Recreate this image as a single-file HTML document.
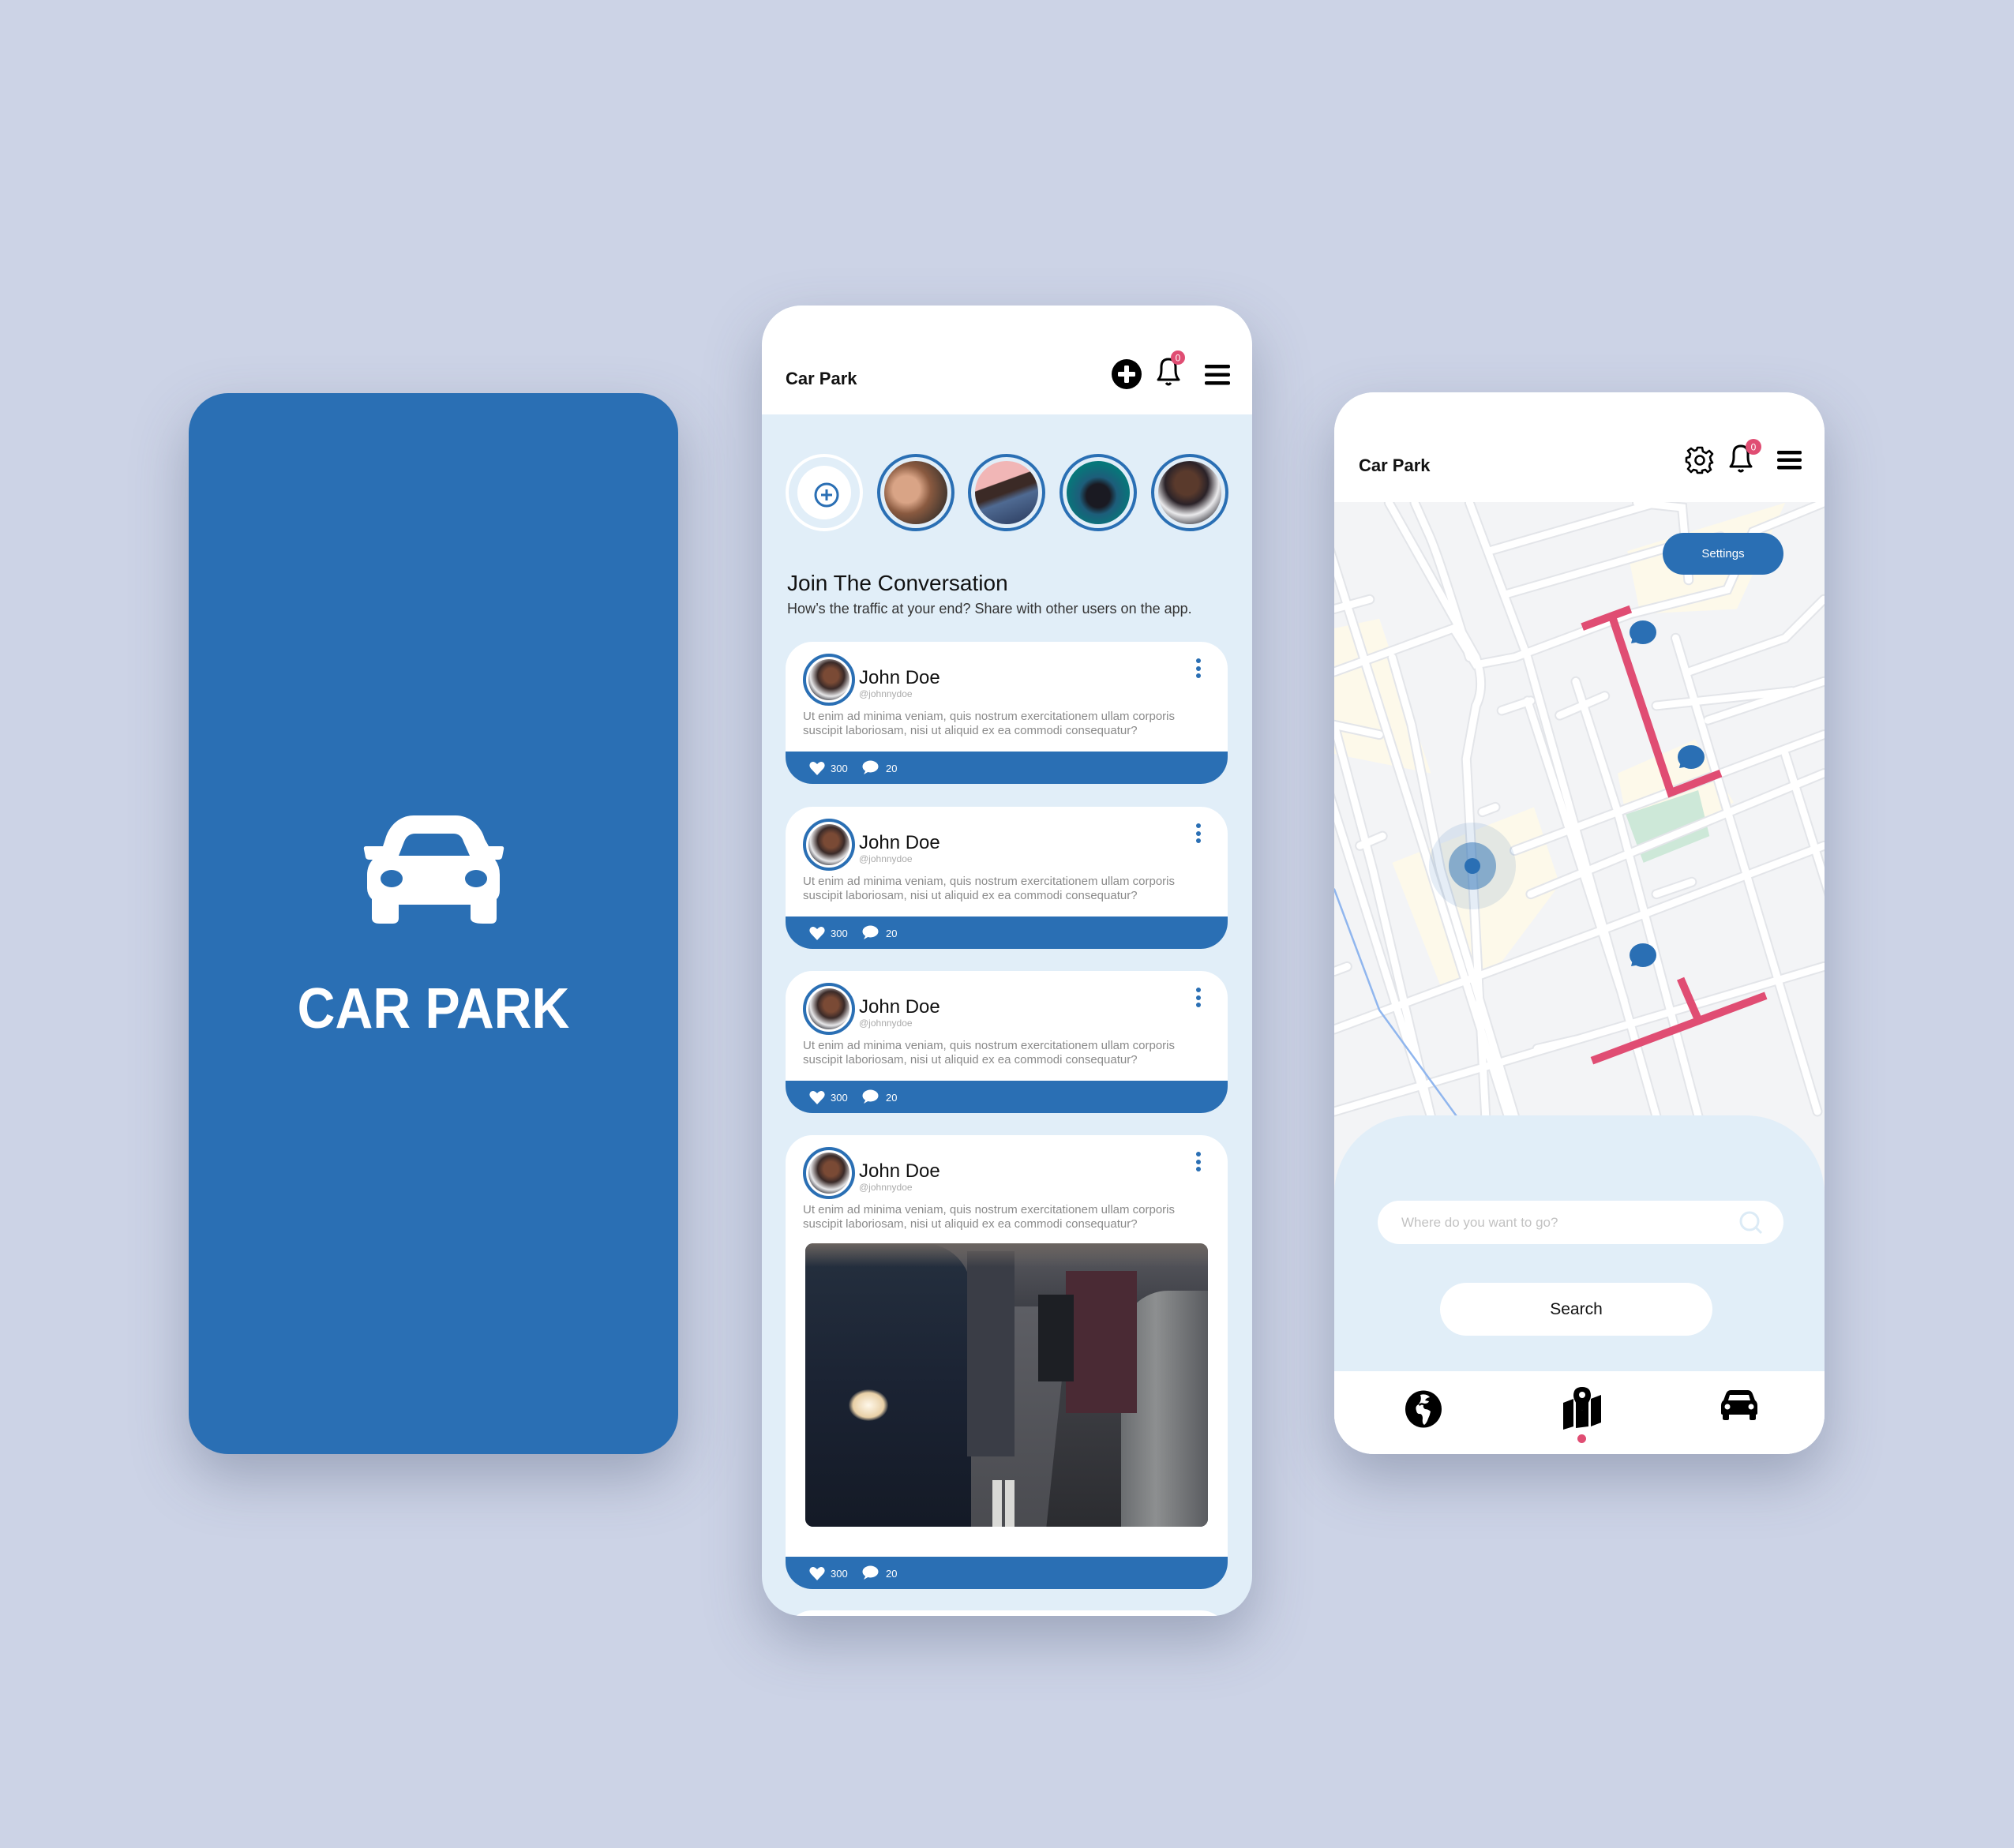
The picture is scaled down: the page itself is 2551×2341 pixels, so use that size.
<!DOCTYPE html>
<html><head><meta charset="utf-8"><style>
*{margin:0;padding:0;box-sizing:border-box}
body{width:2551px;height:2341px;background:#ccd3e6;position:relative;overflow:hidden;font-family:"Liberation Sans",sans-serif}
.abs{position:absolute}
.left{left:239px;top:498px;width:620px;height:1344px;background:#2a6fb4;border-radius:50px;box-shadow:0 30px 70px rgba(70,80,110,.35)}
.phone{background:#fff;border-radius:50px;overflow:hidden;box-shadow:0 30px 70px rgba(70,80,110,.35)}
.card{position:absolute;left:30px;width:560px;background:#fff;border-radius:34px;overflow:hidden}
.bar{position:absolute;left:0;right:0;bottom:0;height:41px;background:#2a6fb4;color:#fff;font-size:13px}
.av{position:absolute;left:22px;top:15px;width:66px;height:66px;border-radius:50%;border:4px solid #2a6fb4;background:#fff;padding:3px}
.av div{width:100%;height:100%;border-radius:50%;background:radial-gradient(circle at 55% 40%,#7a4a35 0 22%,#3a2a28 40%,#e8e8ea 62%,#2c2c34 80%)}
.nm{position:absolute;left:93px;top:32px;font-size:24px;color:#111}
.hd{position:absolute;left:93px;top:59px;font-size:12px;color:#aaa}
.bd{position:absolute;left:22px;top:86px;font-size:15px;line-height:18px;color:#8a8a8a;width:520px}
.dots{position:absolute;left:520px;top:21px;width:6px}
.dots i{display:block;width:6px;height:6px;border-radius:50%;background:#2a6fb4;margin-bottom:3.5px}
.st{position:absolute;width:98px;height:98px;border-radius:50%;border:4px solid #2a6fb4;padding:5px;background:#e1eef8}
.st div{width:100%;height:100%;border-radius:50%}
</style></head><body>

<div class="abs left">
 <svg class="abs" style="left:220px;top:535px" width="181" height="137" viewBox="0 0 181 137">
  <path fill="#fff" fill-rule="evenodd" d="M65,0 H118 C135,0 150,12 155,30 L160,39 H176 Q180,39 179,43 L177,53 Q176,56 172,56 H168 Q174,64 174,75 V95 Q174,102 170,106 V130 Q170,137 163,137 H153 Q137,137 137,130 V113 H46 V130 Q46,137 38,137 H22 Q12,137 12,130 V106 Q6,100 6,92 V75 Q6,64 13,56 H9 Q5,56 4,53 L2,43 Q1,39 5,39 H26 L29,30 C34,12 48,0 65,0 Z M53,33 Q57,23 67,23 H115 Q125,23 128,33 L136,51 H46 Z"/>
  <ellipse cx="37" cy="80" rx="14" ry="11" fill="#2a6fb4"/><ellipse cx="144" cy="80" rx="14" ry="11" fill="#2a6fb4"/>
 </svg>
 <div class="abs" style="left:0;width:620px;top:735px;text-align:center;color:#fff;font-weight:bold;font-size:72px;line-height:90px;transform:scaleX(.92)">CAR PARK</div>
</div>

<!-- middle phone -->
<div class="abs phone" style="left:965px;top:387px;width:621px;height:1660px;background:#e1eef8">
 <div class="abs" style="left:0;top:0;width:621px;height:138px;background:#fff"></div>
 <div class="abs" style="left:30px;top:80px;font-size:22px;font-weight:bold;color:#111">Car Park</div>
 <svg class="abs" style="left:442px;top:67px" width="40" height="40" viewBox="0 0 40 40"><circle cx="20" cy="20" r="19" fill="#000"/><rect x="17" y="9" width="6" height="22" rx="1.5" fill="#fff"/><rect x="9" y="17" width="22" height="6" rx="1.5" fill="#fff"/></svg>
 <svg class="abs" style="left:497px;top:56px" width="42" height="50" viewBox="0 0 42 50"><path d="M5,38 Q9,34 9,26 V22 Q9,12 18,12 Q27,12 27,22 V26 Q27,34 31,38 Z" fill="none" stroke="#000" stroke-width="3" stroke-linejoin="round"/><path d="M15,42 Q18,46 21,42" fill="none" stroke="#000" stroke-width="3"/><circle cx="30" cy="10" r="9" fill="#e04d73"/><text x="30" y="14.5" font-size="12" fill="#fff" text-anchor="middle" font-family="Liberation Sans">0</text></svg>
 <svg class="abs" style="left:561px;top:75px" width="32" height="26"><rect y="0" width="32" height="4.5" rx="2" fill="#000"/><rect y="10.5" width="32" height="4.5" rx="2" fill="#000"/><rect y="21" width="32" height="4.5" rx="2" fill="#000"/></svg>

 <div class="st" style="left:30px;top:188px;border-color:#fff;padding:11px"><div style="background:#fff;position:relative"><svg class="abs" style="left:20px;top:20px" width="34" height="34" viewBox="0 0 34 34"><circle cx="17" cy="17" r="14" fill="none" stroke="#2a6fb4" stroke-width="3"/><path d="M17,10V24M10,17H24" stroke="#2a6fb4" stroke-width="3"/></svg></div></div>
 <div class="st" style="left:146px;top:188px"><div style="background:radial-gradient(circle at 35% 45%,#d9a486 0 25%,#8a5a40 45%,#4a3a30 75%)"></div></div>
 <div class="st" style="left:261px;top:188px"><div style="background:linear-gradient(160deg,#f1b6b6 0 35%,#3b2a26 36% 50%,#4f6a92 60%,#33466a 90%)"></div></div>
 <div class="st" style="left:377px;top:188px"><div style="background:radial-gradient(circle at 50% 55%,#1a1a22 0 25%,#1d5d7a 40%,#06787a 70%)"></div></div>
 <div class="st" style="left:493px;top:188px"><div style="background:radial-gradient(circle at 45% 35%,#5a3a2c 0 22%,#2a2228 40%,#eaeaec 60%,#2d2d35 85%)"></div></div>

 <div class="abs" style="left:32px;top:336px;font-size:28px;font-weight:500;color:#111">Join The Conversation</div>
 <div class="abs" style="left:32px;top:374px;font-size:18px;color:#333">How’s the traffic at your end? Share with other users on the app.</div>

 <!-- cards -->
 <div class="card" style="top:426px;height:180px"><div class="av"><div></div></div><div class="nm">John Doe</div><div class="hd">@johnnydoe</div><div class="bd">Ut enim ad minima veniam, quis nostrum exercitationem ullam corporis suscipit laboriosam, nisi ut aliquid ex ea commodi consequatur?</div><div class="dots"><i></i><i></i><i></i></div><div class="bar"><svg class="abs" style="left:30px;top:12px" width="20" height="18" viewBox="0 0 20 18"><path d="M10,18 L2,9.5 Q-1,6 1.5,2.5 Q5,-1 10,4 Q15,-1 18.5,2.5 Q21,6 18,9.5Z" fill="#fff"/></svg><span class="abs" style="left:57px;top:14px">300</span><svg class="abs" style="left:96px;top:11px" width="22" height="19" viewBox="0 0 22 19"><ellipse cx="11.5" cy="8" rx="10" ry="7.5" fill="#fff"/><path d="M3,18 L6,12 L10,14Z" fill="#fff"/></svg><span class="abs" style="left:127px;top:14px">20</span></div></div>
 <div class="card" style="top:635px;height:180px"><div class="av"><div></div></div><div class="nm">John Doe</div><div class="hd">@johnnydoe</div><div class="bd">Ut enim ad minima veniam, quis nostrum exercitationem ullam corporis suscipit laboriosam, nisi ut aliquid ex ea commodi consequatur?</div><div class="dots"><i></i><i></i><i></i></div><div class="bar"><svg class="abs" style="left:30px;top:12px" width="20" height="18" viewBox="0 0 20 18"><path d="M10,18 L2,9.5 Q-1,6 1.5,2.5 Q5,-1 10,4 Q15,-1 18.5,2.5 Q21,6 18,9.5Z" fill="#fff"/></svg><span class="abs" style="left:57px;top:14px">300</span><svg class="abs" style="left:96px;top:11px" width="22" height="19" viewBox="0 0 22 19"><ellipse cx="11.5" cy="8" rx="10" ry="7.5" fill="#fff"/><path d="M3,18 L6,12 L10,14Z" fill="#fff"/></svg><span class="abs" style="left:127px;top:14px">20</span></div></div>
 <div class="card" style="top:843px;height:180px"><div class="av"><div></div></div><div class="nm">John Doe</div><div class="hd">@johnnydoe</div><div class="bd">Ut enim ad minima veniam, quis nostrum exercitationem ullam corporis suscipit laboriosam, nisi ut aliquid ex ea commodi consequatur?</div><div class="dots"><i></i><i></i><i></i></div><div class="bar"><svg class="abs" style="left:30px;top:12px" width="20" height="18" viewBox="0 0 20 18"><path d="M10,18 L2,9.5 Q-1,6 1.5,2.5 Q5,-1 10,4 Q15,-1 18.5,2.5 Q21,6 18,9.5Z" fill="#fff"/></svg><span class="abs" style="left:57px;top:14px">300</span><svg class="abs" style="left:96px;top:11px" width="22" height="19" viewBox="0 0 22 19"><ellipse cx="11.5" cy="8" rx="10" ry="7.5" fill="#fff"/><path d="M3,18 L6,12 L10,14Z" fill="#fff"/></svg><span class="abs" style="left:127px;top:14px">20</span></div></div>
 <div class="card" style="top:1051px;height:575px"><div class="av"><div></div></div><div class="nm">John Doe</div><div class="hd">@johnnydoe</div><div class="bd">Ut enim ad minima veniam, quis nostrum exercitationem ullam corporis suscipit laboriosam, nisi ut aliquid ex ea commodi consequatur?</div><div class="dots"><i></i><i></i><i></i></div>
  <div class="abs" style="left:25px;top:137px;width:510px;height:359px;border-radius:10px;overflow:hidden;background:linear-gradient(180deg,#5a5a60 0%,#3b3d44 25%,#3a3b40 60%,#2b2c30 100%)">
   <div class="abs" style="left:170px;top:80px;width:150px;height:280px;background:linear-gradient(180deg,#5d5e64,#4a4b50);transform:skewX(-6deg)"></div>
   <div class="abs" style="left:0;top:0;width:210px;height:359px;background:linear-gradient(180deg,#25303f,#1b2333 50%,#141a26);border-top-right-radius:60px"></div>
   <div class="abs" style="left:55px;top:185px;width:50px;height:40px;border-radius:50%;background:radial-gradient(#fff8ea,#e8cfa6 55%,rgba(0,0,0,0) 72%)"></div>
   <div class="abs" style="left:205px;top:10px;width:60px;height:260px;background:#3a3d46"></div>
   <div class="abs" style="left:400px;top:60px;width:110px;height:299px;background:linear-gradient(90deg,#6a6d70,#8d8f90 40%,#5a5c60);border-top-left-radius:60px"></div>
   <div class="abs" style="left:330px;top:35px;width:90px;height:180px;background:#4a2a34"></div>
   <div class="abs" style="left:295px;top:65px;width:45px;height:110px;background:#1d1f24"></div>
   <div class="abs" style="left:237px;top:300px;width:12px;height:60px;background:#d9d9d6"></div>
   <div class="abs" style="left:253px;top:300px;width:12px;height:60px;background:#d9d9d6"></div>
   <div class="abs" style="left:0;top:0;width:510px;height:30px;background:linear-gradient(180deg,#6b6460,rgba(0,0,0,0))"></div>
  </div>
  <div class="bar"><svg class="abs" style="left:30px;top:12px" width="20" height="18" viewBox="0 0 20 18"><path d="M10,18 L2,9.5 Q-1,6 1.5,2.5 Q5,-1 10,4 Q15,-1 18.5,2.5 Q21,6 18,9.5Z" fill="#fff"/></svg><span class="abs" style="left:57px;top:14px">300</span><svg class="abs" style="left:96px;top:11px" width="22" height="19" viewBox="0 0 22 19"><ellipse cx="11.5" cy="8" rx="10" ry="7.5" fill="#fff"/><path d="M3,18 L6,12 L10,14Z" fill="#fff"/></svg><span class="abs" style="left:127px;top:14px">20</span></div></div>
 <div class="card" style="top:1653px;height:100px"></div>
</div>

<!-- right phone -->
<div class="abs phone" style="left:1690px;top:497px;width:621px;height:1345px;background:#f3f4f6">
 <svg class="abs" style="left:0;top:0" width="621" height="1345">
  <g transform="translate(0,-7) scale(0.408,0.612)">
   <g fill="#fdf9ea">
    <polygon points="0,500 140,480 300,800 0,760"/>
    <polygon points="180,985 620,870 700,1030 520,1190 330,1240"/>
    <polygon points="910,340 1400,240 1250,460 950,470"/>
    <polygon points="880,800 1120,730 1240,860 1140,900 900,870"/>
   </g>
   <polygon points="905,885 1130,835 1165,930 960,985" fill="#cde8d8"/>
   <g fill="none" stroke-linecap="round">
    <g stroke="#e3e5e9" stroke-width="13" vector-effect="non-scaling-stroke" id="rd">
     <path vector-effect="non-scaling-stroke" d="M-300,240L300,1510M-60,240L540,1510M170,240L440,560Q470,620 440,660L410,770L470,1510M250,240L290,300Q320,340 420,560M420,240L600,560L1000,1510M600,650L770,1000L900,1270M750,610L880,880L1130,1510M1060,520L1500,1500M1400,760L1560,1100M180,560L240,700L330,1000L560,1510M0,700L120,1000L300,1510M940,240L1080,250L1100,400"/>
     <path vector-effect="non-scaling-stroke" d="M0,460L110,440M0,590L370,500L440,575L560,560L920,470L1220,420L1300,300L1520,240M480,340L1000,240M530,430L1050,330L1200,310M0,700L140,720M1100,590L1400,520L1520,440M1000,660L1420,630M1160,690L1520,610M560,960L1520,720M520,670L610,650M700,680L840,640M610,1050L1520,800M0,1330L850,1120L1520,950M0,1500L1520,1200M630,1370L760,1350M0,1210L40,1200M1000,1050L1110,1025M460,880L500,870M80,950L150,930"/>
    </g>
    <g stroke="#fff" stroke-width="9">
     <path vector-effect="non-scaling-stroke" d="M-300,240L300,1510M-60,240L540,1510M170,240L440,560Q470,620 440,660L410,770L470,1510M250,240L290,300Q320,340 420,560M420,240L600,560L1000,1510M600,650L770,1000L900,1270M750,610L880,880L1130,1510M1060,520L1500,1500M1400,760L1560,1100M180,560L240,700L330,1000L560,1510M0,700L120,1000L300,1510M940,240L1080,250L1100,400"/>
     <path vector-effect="non-scaling-stroke" d="M0,460L110,440M0,590L370,500L440,575L560,560L920,470L1220,420L1300,300L1520,240M480,340L1000,240M530,430L1050,330L1200,310M0,700L140,720M1100,590L1400,520L1520,440M1000,660L1420,630M1160,690L1520,610M560,960L1520,720M520,670L610,650M700,680L840,640M610,1050L1520,800M0,1330L850,1120L1520,950M0,1500L1520,1200M630,1370L760,1350M0,1210L40,1200M1000,1050L1110,1025M460,880L500,870M80,950L150,930"/>
    </g>
    <path vector-effect="non-scaling-stroke" d="M0,1040L140,1290L380,1510" stroke="#90b6ee" stroke-width="2.5"/>
    <g stroke="#e04d73" stroke-width="10" stroke-linecap="butt">
     <path vector-effect="non-scaling-stroke" d="M770,497L920,460M865,480L1045,840L1200,800" stroke-linejoin="miter"/>
     <path vector-effect="non-scaling-stroke" d="M1075,1225L1130,1310M800,1395L1340,1260"/>
    </g>
   </g>
  </g>
  <g fill="#2a6fb4">
   <ellipse cx="391" cy="304" rx="17" ry="15"/><path d="M376,318L379,306L387,316Z"/>
   <ellipse cx="452" cy="462" rx="17" ry="15"/><path d="M437,476L440,464L448,474Z"/>
   <ellipse cx="391" cy="713" rx="17" ry="15"/><path d="M376,727L379,715L387,725Z"/>
  </g>
  <circle cx="175" cy="600" r="55" fill="#2a6fb4" fill-opacity=".12"/>
  <circle cx="175" cy="600" r="30" fill="#2a6fb4" fill-opacity=".5"/>
  <circle cx="175" cy="600" r="10" fill="#2a6fb4"/>
 </svg>
 <div class="abs" style="left:0;top:0;width:621px;height:139px;background:#fff"></div>
 <div class="abs" style="left:31px;top:80px;font-size:22px;font-weight:bold;color:#111">Car Park</div>
 <svg class="abs" style="left:444px;top:67px" width="38" height="38" viewBox="-19 -19 38 38"><path d="M-3,-16H3L4,-11L8,-9L12,-12L16,-8L13,-4L14,0L16,3L13,4L12,8L14,12L10,15L7,12L3,13L3,16H-3L-4,13L-8,12L-11,15L-15,11L-12,7L-14,3L-17,2V-3L-13,-4L-12,-8L-15,-12L-11,-15L-7,-12L-4,-13Z" fill="none" stroke="#000" stroke-width="2.6" stroke-linejoin="round"/><circle r="5.5" fill="none" stroke="#000" stroke-width="2.6"/></svg>
 <svg class="abs" style="left:500px;top:56px" width="42" height="50" viewBox="0 0 42 50"><path d="M2,38 Q6,34 6,26 V22 Q6,12 15,12 Q24,12 24,22 V26 Q24,34 28,38 Z" fill="none" stroke="#000" stroke-width="3" stroke-linejoin="round"/><path d="M12,42 Q15,46 18,42" fill="none" stroke="#000" stroke-width="3"/><circle cx="31" cy="13" r="10" fill="#e04d73"/><text x="31" y="17.5" font-size="12" fill="#fff" text-anchor="middle" font-family="Liberation Sans">0</text></svg>
 <svg class="abs" style="left:561px;top:74px" width="31" height="24"><rect y="0" width="31" height="4.5" rx="2" fill="#000"/><rect y="9.5" width="31" height="4.5" rx="2" fill="#000"/><rect y="19" width="31" height="4.5" rx="2" fill="#000"/></svg>
 <div class="abs" style="left:416px;top:178px;width:153px;height:53px;border-radius:27px;background:#2a6fb4;color:#fff;font-size:15px;text-align:center;line-height:53px">Settings</div>

 <div class="abs" style="left:0;top:916px;width:621px;height:429px;background:#e1eef8;border-radius:100px 100px 0 0"></div>
 <div class="abs" style="left:55px;top:1024px;width:514px;height:55px;border-radius:28px;background:#fff;color:#c2c2c2;font-size:17px;line-height:55px;padding-left:30px">Where do you want to go?</div>
 <svg class="abs" style="left:512px;top:1036px" width="32" height="32"><circle cx="14" cy="14" r="11" fill="none" stroke="#dcebf6" stroke-width="3"/><path d="M22,22L29,29" stroke="#dcebf6" stroke-width="3"/></svg>
 <div class="abs" style="left:134px;top:1128px;width:345px;height:67px;border-radius:34px;background:#fff;color:#111;font-size:21px;text-align:center;line-height:67px">Search</div>
 <div class="abs" style="left:0;top:1240px;width:621px;height:105px;background:#fff"></div>
 <svg class="abs" style="left:89px;top:1264px" width="48" height="48" viewBox="0 0 48 48"><ellipse cx="24" cy="24" rx="23" ry="23.5" fill="#000"/><path d="M20,6 Q28,4 32,9 Q27,10 26,13 L31,14 Q30,17 25,17 Q21,15 18,18 Q13,20 15,26 Q16,31 20,30 Q23,31 23,36 Q22,42 25,44 Q28,42 30,36 Q32,32 33,27 Q30,24 26,24 Q23,22 24,19 Q20,18 20,20 Q17,19 19,16 Q22,12 20,6Z" fill="#fff"/></svg>
 <svg class="abs" style="left:288px;top:1258px" width="52" height="56" viewBox="0 0 52 56"><path d="M2,22L15,17V52L2,56Z M37,17L50,12V47L37,52Z" fill="#000"/><path d="M18,20V54L34,52V20L26,32Z" fill="#000"/><path d="M26,2Q37,2 37,13Q37,20 26,32Q15,20 15,13Q15,2 26,2Z" fill="#000"/><circle cx="26" cy="12" r="4" fill="#fff"/></svg>
 <svg class="abs" style="left:490px;top:1262px" width="46" height="40" viewBox="0 0 46 40"><path d="M12,2H34Q38,2 40,7L43,15Q46,17 46,22V31Q46,33 44,33V38Q44,40 41,40H38Q36,40 36,38V33H10V38Q10,40 8,40H5Q2,40 2,38V33Q0,33 0,31V22Q0,17 3,15L6,7Q8,2 12,2Z M11,8L9,15H37L35,8Z" fill="#000" fill-rule="evenodd"/><circle cx="8" cy="23" r="3.5" fill="#fff"/><circle cx="38" cy="23" r="3.5" fill="#fff"/></svg>
 <div class="abs" style="left:308px;top:1320px;width:11px;height:11px;border-radius:50%;background:#e04d73"></div>
</div>
</body></html>
